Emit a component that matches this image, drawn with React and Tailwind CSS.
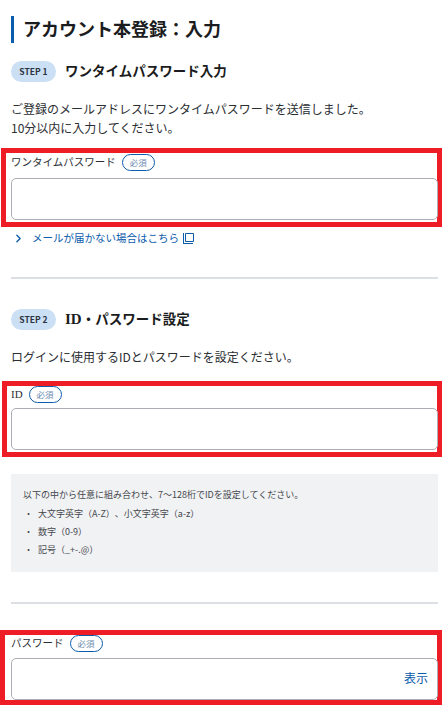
import { ChevronRight } from 'lucide-react'

const font = { fontFamily: '"Noto Sans CJK JP", "Noto Sans", sans-serif' }

function Badge() {
  return (
    <span className="inline-flex h-[17px] w-[33px] items-center justify-center rounded-full border border-[#0b5cab] text-[8.5px] leading-none text-[#6b8cb0]">
      必須
    </span>
  )
}

function StepTitle({ step, children, className }) {
  return (
    <div className={`flex items-center ${className}`}>
      <span className="flex h-[21px] w-[45px] items-center justify-center rounded-full bg-[#cbdff5] text-[8.5px] font-bold text-[#2b3440]">
        STEP {step}
      </span>
      <h2 className="ml-[9px] -mt-[3px] text-[13.5px] font-bold leading-[20px] text-[#1a1c20]">{children}</h2>
    </div>
  )
}

function Field({ label, frame, labelTop, right }) {
  return (
    <div className={`border-[5px] border-[#ee1c25] ${frame}`}>
      <div className={`flex items-start gap-[6px] text-[10.5px] leading-[14px] text-[#2b2e33] ${labelTop}`}>
        <span className="pt-[1px]">{label}</span>
        <Badge />
      </div>
      <div className="relative -mr-[1px] h-[42px] rounded-[5px] border border-[#adadb5] bg-white">
        {right && (
          <span className="absolute right-[9px] top-[9px] text-[12px] leading-[20px] text-[#0b5cab]">{right}</span>
        )}
      </div>
    </div>
  )
}

export default function App() {
  return (
    <div style={font} className="h-[708px] w-[442px] overflow-hidden bg-white pl-[11px] pt-[16px]">
      <h1 className="h-[27px] border-l-[3px] border-[#0b5cab] pl-[9px] text-[18px] font-bold leading-[25px] text-[#1a1c20]">
        アカウント本登録：入力
      </h1>
      <StepTitle step="1" className="mt-[18px]">ワンタイムパスワード入力</StepTitle>
      <p className="mt-[17px] text-[12px] leading-[19px] text-[#2b2e33]">
        ご登録のメールアドレスにワンタイムパスワードを送信しました。
        <br />
        10分以内に入力してください。
      </p>
      <div className="-ml-[10px] mt-[11px] w-[441px]">
        <Field label="ワンタイムパスワード" frame="pl-[5px] h-[79px]" labelTop="h-[25px] pt-[1px]" />
      </div>
      <a className="mt-[1px] flex h-[20px] items-center text-[10.5px] text-[#0b5cab]">
        <ChevronRight className="ml-[1px] h-[13px] w-[13px]" strokeWidth={2.5} />
        <span className="ml-[7px]">メールが届かない場合はこちら</span>
        <svg className="ml-[4px] h-[11px] w-[11px]" viewBox="0 0 11 11" fill="none" stroke="currentColor">
          <path d="M0.5 0v11M0.5 10.5h9.5M2.5 0.5h8v8h-8z" />
        </svg>
      </a>
      <hr className="mt-[29px] h-[2px] w-[427px] border-0 bg-[#dcdfe3]" />
      <StepTitle step="2" className="mt-[30px]">
        <span className="font-['Liberation_Serif'] text-[15px]">ID</span>・パスワード設定
      </StepTitle>
      <p className="mt-[18px] text-[12px] leading-[18px] text-[#2b2e33]">ログインに使用するIDとパスワードを設定ください。</p>
      <div className="-ml-[9px] mt-[15px] w-[440px]">
        <Field
          label={<span className="font-['Liberation_Serif'] text-[11px]">ID</span>}
          frame="pl-[4px] h-[76px]"
          labelTop="h-[22px]"
        />
      </div>
      <div className="mt-[17px] h-[98px] w-[427px] bg-[#f1f2f4] pl-[12px] pt-[12px] text-[9px] leading-[18px] text-[#44474c] [text-spacing-trim:space-all]">
        <p className="mb-[1px]">以下の中から任意に組み合わせ、7〜128桁でIDを設定してください。</p>
        <ul>
          <li className="flex"><span className="w-[15px] pl-[1px]">・</span>大文字英字（A-Z）、小文字英字（a-z）</li>
          <li className="flex"><span className="w-[15px] pl-[1px]">・</span>数字（0-9）</li>
          <li className="flex"><span className="w-[15px] pl-[1px]">・</span>記号（_+-.@）</li>
        </ul>
      </div>
      <hr className="mt-[30px] h-[2px] w-[427px] border-0 bg-[#dcdfe3]" />
      <div className="-ml-[11px] mt-[26px] w-[442px]">
        <Field label="パスワード" frame="pl-[6px] h-[75px]" labelTop="h-[23px]" right="表示" />
      </div>
    </div>
  )
}
